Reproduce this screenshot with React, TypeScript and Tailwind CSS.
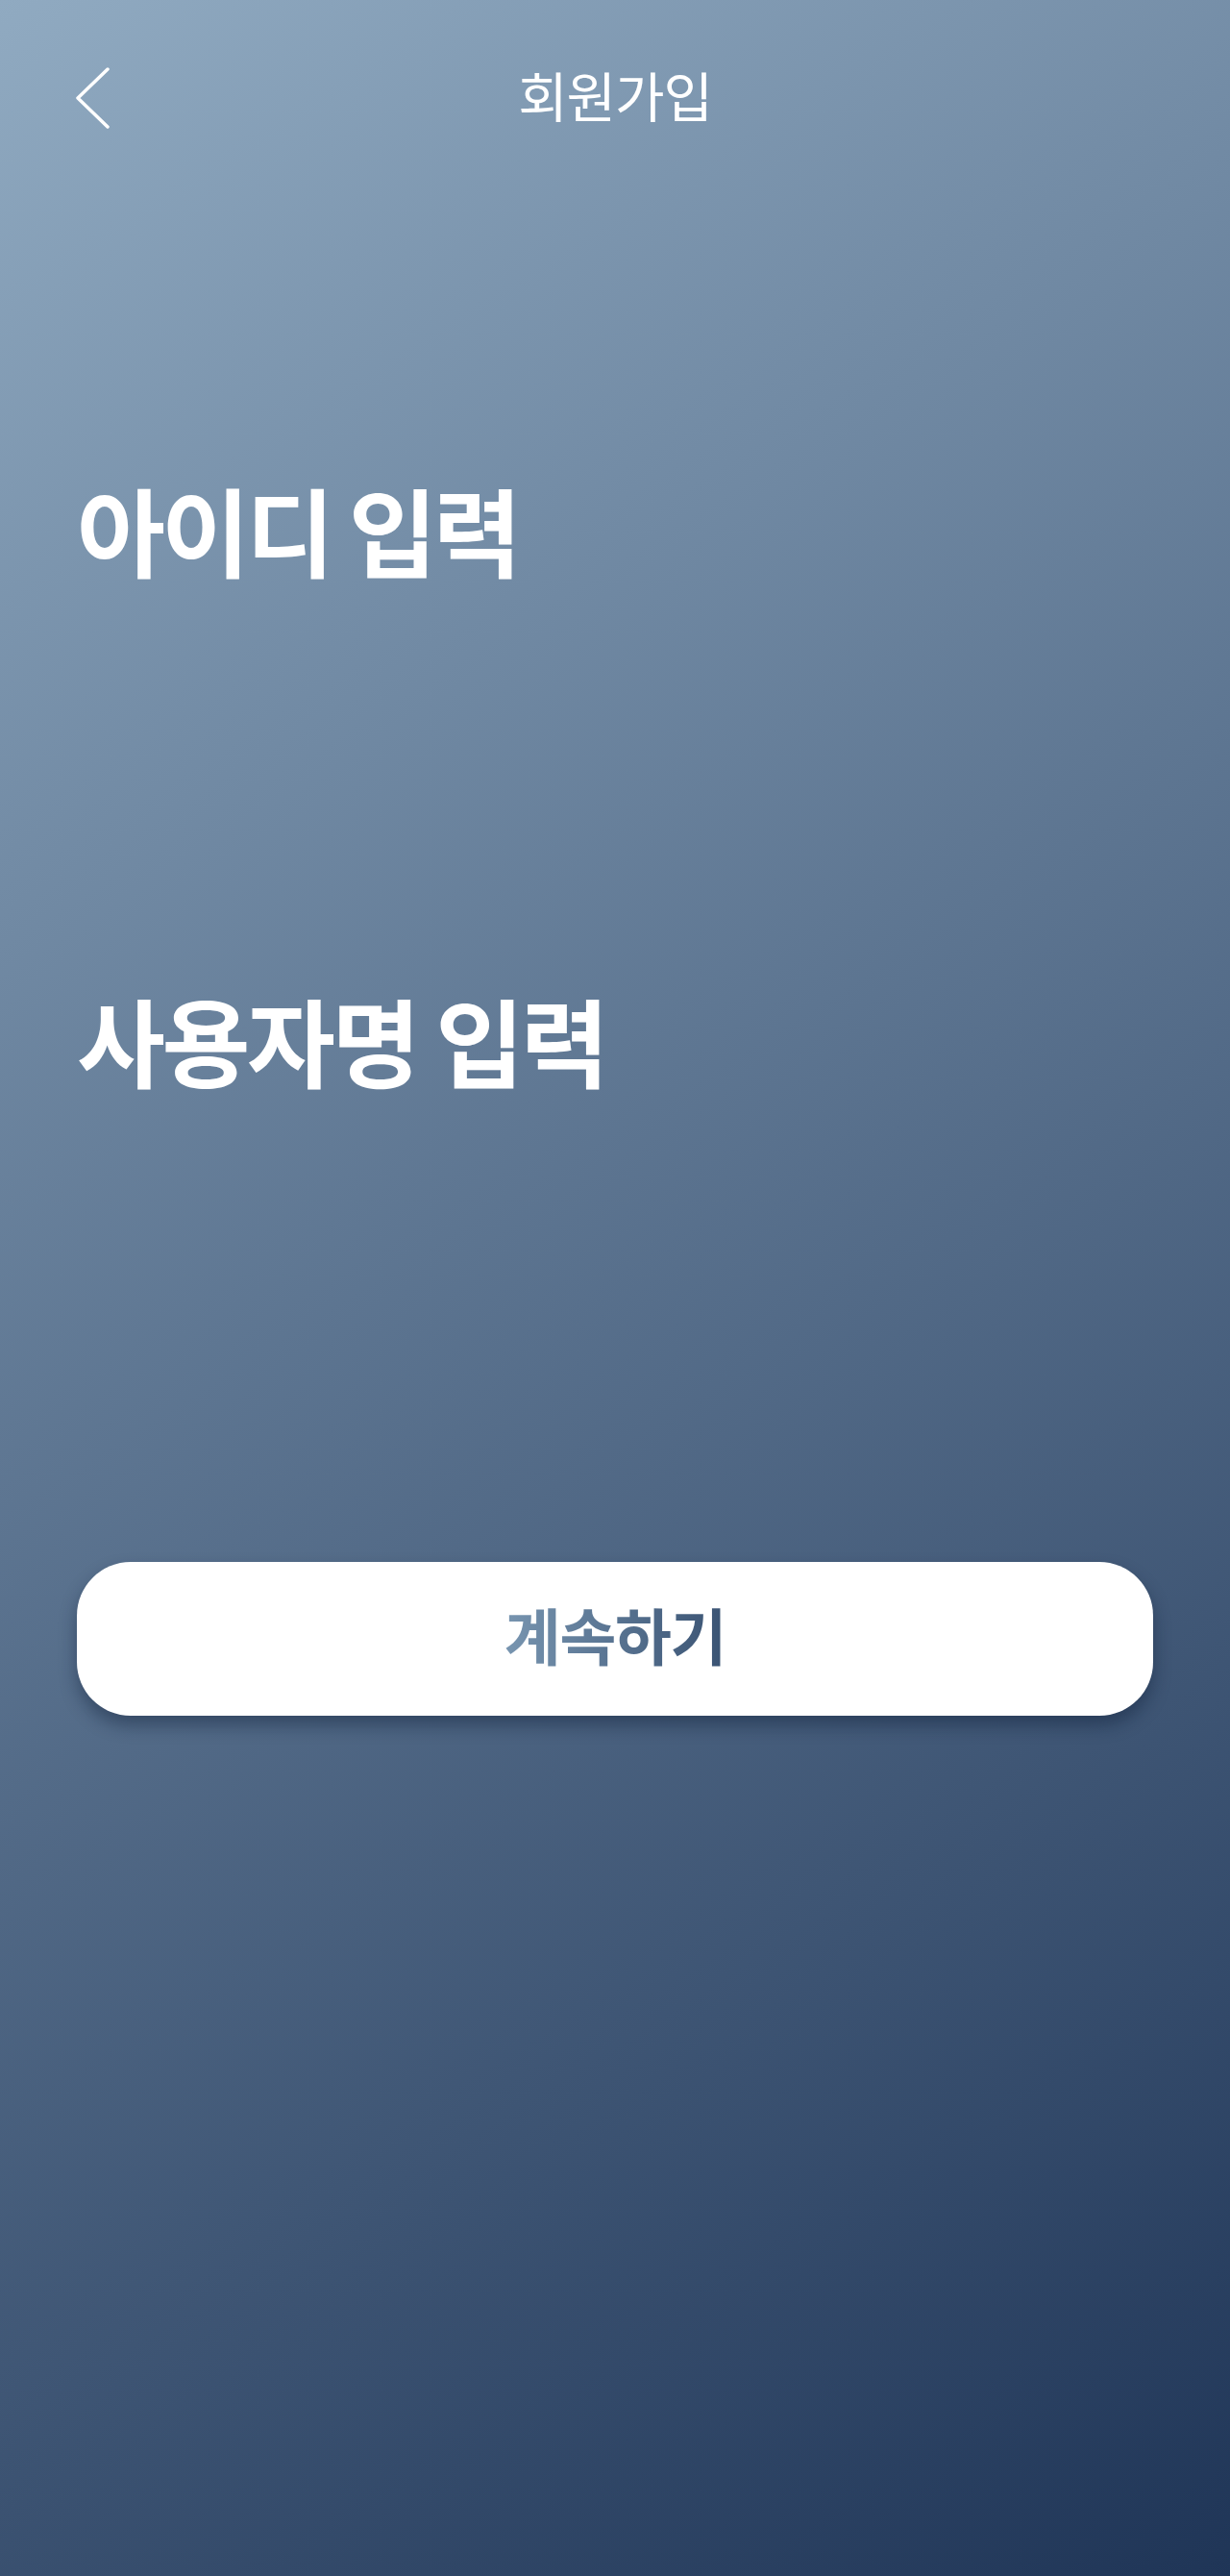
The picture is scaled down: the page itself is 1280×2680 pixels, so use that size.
const font = { fontFamily: '"Noto Sans CJK KR", "Noto Sans", sans-serif' };

export default function App() {
  return (
    <div
      className="flex min-h-[2680px] w-full flex-col bg-linear-[148deg] from-[#90aac1] to-[#1f3557] px-[80px] text-white"
      style={font}
    >
      <header className="relative flex h-[200px] items-start justify-center pt-[66px]">
        <button type="button" className="absolute left-[-12px] top-[70px] text-white">
          <svg width="60" height="64" viewBox="0 0 60 64" fill="none">
            <path d="M44 2 L13 32 L44 62" stroke="white" strokeWidth="3.5" strokeLinecap="round" strokeLinejoin="round" />
          </svg>
        </button>
        <h1 className="text-[56px] font-normal leading-[64px] tracking-[-0.02em]">회원가입</h1>
      </header>

      <h2 className="mt-[290px] text-[100px] font-bold leading-[120px] tracking-[-0.04em]">아이디 입력</h2>

      <h2 className="mt-[411px] text-[100px] font-bold leading-[120px] tracking-[-0.035em]">사용자명 입력</h2>

      <button
        type="button"
        className="mt-[484px] flex h-[160px] w-full items-center justify-center rounded-[56px] bg-white pb-[12px] shadow-[0_10px_18px_rgba(10,25,50,0.4)]"
      >
        <span className="bg-linear-to-r from-[#7895b0] to-[#3a5373] bg-clip-text text-[64px] font-bold leading-[80px] tracking-[-0.02em] text-transparent">
          계속하기
        </span>
      </button>
    </div>
  );
}
